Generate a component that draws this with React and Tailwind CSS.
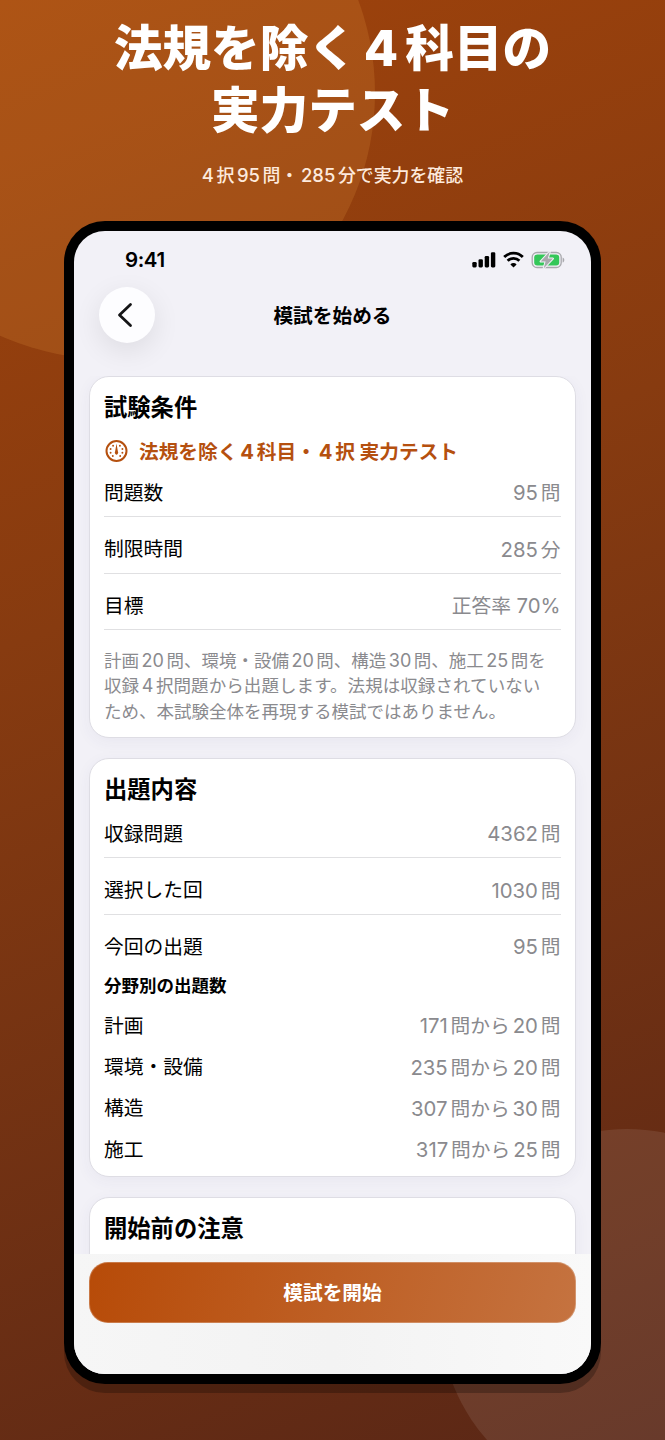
import { Fragment } from "react";

const conditions = [
    { label: "問題数", value: "95問" },
    { label: "制限時間", value: "285分" },
    { label: "目標", value: "正答率 70%" },
];

const contents = [
    { label: "収録問題", value: "4362問" },
    { label: "選択した回", value: "1030問" },
    { label: "今回の出題", value: "95問" },
];

const categories = [
    { label: "計画", value: "171問から20問" },
    { label: "環境・設備", value: "235問から20問" },
    { label: "構造", value: "307問から30問" },
    { label: "施工", value: "317問から25問" },
];

// Adds a little air between digits and Japanese characters
function Spaced({ text }) {
    return text.split(/(\d+%?)/).map((part, i, parts) => {
        if (!/^\d+%?$/.test(part)) return <Fragment key={i}>{part}</Fragment>;
        const before = parts[i - 1] && !parts[i - 1].endsWith(" ");
        const after = parts[i + 1];
        return (
            <span key={i} className={`text-[1.03em] ${before ? "ml-[0.14em]" : ""} ${after ? "mr-[0.14em]" : ""}`}>
                {part}
            </span>
        );
    });
}

function Row({ label, value, className = "h-10 pt-[3px]" }) {
    return (
        <div className={`flex items-center justify-between text-[19.75px] ${className}`}>
            <span className="text-black">{label}</span>
            <span className="text-[#8a8a8e]">
                <Spaced text={value} />
            </span>
        </div>
    );
}

function Divider() {
    return <div className="mt-1 mb-[11.5px] h-px bg-[#e0e0e2]" />;
}

function Card({ title, children, className = "" }) {
    return (
        <section className={`rounded-[20px] border border-[#dedde4] bg-white pt-[15px] pr-[14.5px] pl-[14px] shadow-[0_4px_16px_rgba(60,50,110,0.05)] ${className}`}>
            <h2 className="h-[32px] text-[23.3px] leading-[32px] font-bold text-black">{title}</h2>
            {children}
        </section>
    );
}

function GaugeIcon() {
    return (
        <svg viewBox="0 0 24 24" className="-mt-0.5 h-6 w-6 fill-none stroke-[#b5500f]">
            <circle cx="12.5" cy="12" r="10" strokeWidth="2" />
            <path d="M12.5 4.4 L11.1 12.6 a1.7 1.9 0 1 0 2.8 0 Z" className="fill-[#b5500f] stroke-none" />
            <g className="fill-[#b5500f] stroke-none">
                <circle cx="9.1" cy="6.7" r="0.95" />
                <circle cx="15.9" cy="6.7" r="0.95" />
                <circle cx="6.6" cy="10" r="0.95" />
                <circle cx="18.4" cy="10" r="0.95" />
                <circle cx="6.6" cy="13.8" r="0.95" />
                <circle cx="18.4" cy="13.8" r="0.95" />
                <circle cx="8.8" cy="17" r="0.95" />
                <circle cx="16.2" cy="17" r="0.95" />
            </g>
        </svg>
    );
}

function StatusIcons() {
    return (
        <svg viewBox="0 0 94 18" className="h-[18px] w-[94px]">
            <rect x="0.3" y="11" width="4.4" height="5.4" rx="1.3" />
            <rect x="6.5" y="8.2" width="4.4" height="8.2" rx="1.3" />
            <rect x="12.7" y="5" width="4.4" height="11.4" rx="1.3" />
            <rect x="18.9" y="1.2" width="4.4" height="15.2" rx="1.3" />
            <g fill="none" stroke="#000" strokeWidth="2.8">
                <path d="M32.2 6 a13.2 13.2 0 0 1 18.6 0" />
                <path d="M35.6 9.7 a8.4 8.4 0 0 1 11.8 0" />
            </g>
            <path d="M41.5 16.6 l-3.1 -3.2 a4.4 4.4 0 0 1 6.2 0 Z" />
            <rect x="60.2" y="1.5" width="29" height="15" rx="4.8" fill="none" stroke="#a9a9ad" strokeWidth="1.3" />
            <path d="M90.6 6.4 v5.2 c1.2 -0.5 1.7 -1.4 1.7 -2.6 s-0.5 -2.1 -1.7 -2.6 Z" fill="#a9a9ad" />
            <rect x="62.2" y="3.5" width="25" height="11" rx="3" fill="#34c759" />
            <path
                d="M77.8 0.6 L68.6 10.4 h5 L71.6 17.4 L81 7.6 h-5.2 Z"
                fill="#a9a9ad"
                stroke="#f2f1f7"
                strokeWidth="2"
                paintOrder="stroke"
                strokeLinejoin="round"
            />
        </svg>
    );
}

export default function App() {
    return (
        <div className="relative h-[1440px] w-[665px] overflow-hidden bg-[linear-gradient(158deg,#a0430b_0%,#873b10_38%,#5a2716_100%)] font-[Inter,'Noto_Sans_CJK_JP',sans-serif]">
            <div className="absolute top-[-173px] left-[-157px] h-[532px] w-[532px] rounded-full bg-[#ffb450]/15" />
            <div className="absolute top-[1129px] left-[440px] h-[374px] w-[374px] rounded-full bg-white/9" />

            <div className="relative flex flex-col items-center">
                <h1 className="mt-[17px] text-center text-[48.6px] leading-[62px] font-extrabold text-white">
                    <Spaced text="法規を除く4科目の" />
                    <br />
                    実力テスト
                </h1>
                <p className="mt-[19px] h-[28px] text-[17.9px] leading-[28px] font-medium text-[#fdeadd]">
                    <Spaced text="4択95問・285分で実力を確認" />
                </p>

                <div className="mt-[32px] h-[1163px] w-[537px] rounded-[41px] bg-black p-[10px] shadow-[0_9px_0_rgba(0,0,0,0.25)]">
                    <div className="flex h-full flex-col overflow-hidden rounded-[31px] bg-[#f2f1f7]">
                        <div className="flex h-[46px] items-end justify-between pr-[25px] pl-[51px]">
                            <span className="h-[30px] text-[20.5px] leading-[26px] font-semibold tracking-[-0.4px] text-black">9:41</span>
                            <div className="mb-[8px]">
                                <StatusIcons />
                            </div>
                        </div>

                        <div className="mt-[10px] grid h-[56px] grid-cols-[1fr_auto_1fr] items-center px-[25px]">
                            <button className="flex h-14 w-14 items-center justify-center rounded-full bg-[#fdfdff] shadow-[0_8px_28px_rgba(0,0,0,0.09)]">
                                <svg viewBox="0 0 16 26" className="mr-[4px] h-[26px] w-4 fill-none stroke-[#151517]">
                                    <path d="M13.5 2.5 L2.5 13 L13.5 23.5" strokeWidth="2.8" strokeLinecap="round" strokeLinejoin="round" />
                                </svg>
                            </button>
                            <h2 className="pt-1 text-[19.7px] font-bold text-black">模試を始める</h2>
                        </div>

                        <main className="mt-[33px] flex min-h-0 flex-1 flex-col gap-5 overflow-hidden px-[15px]">
                            <Card title="試験条件" className="h-[362px] shrink-0">
                                <div className="mt-[7px] flex h-[40px] items-center gap-[11px] pt-[2px] text-[19.7px] font-bold text-[#b5500f]">
                                    <GaugeIcon />
                                    <span>
                                        <Spaced text="法規を除く4科目・4択 実力テスト" />
                                    </span>
                                </div>
                                <div className="mt-px">
                                    {conditions.map((row) => (
                                        <Fragment key={row.label}>
                                            <Row {...row} />
                                            <Divider />
                                        </Fragment>
                                    ))}
                                </div>
                                <p className="mt-[17.5px] text-[17.5px] leading-[25.5px] whitespace-nowrap text-[#8a8a8e]">
                                    <Spaced text="計画20問、環境・設備20問、構造30問、施工25問を" />
                                    <br />
                                    <span className="tracking-[0.08px]">
                                        <Spaced text="収録4択問題から出題します。法規は収録されていない" />
                                    </span>
                                    <br />
                                    ため、本試験全体を再現する模試ではありません。
                                </p>
                            </Card>

                            <Card title="出題内容" className="h-[419px] shrink-0">
                                <div className="mt-[7px]">
                                    {contents.map((row, i) => (
                                        <Fragment key={row.label}>
                                            {i > 0 && <Divider />}
                                            <Row {...row} />
                                        </Fragment>
                                    ))}
                                </div>
                                <h3 className="h-[39px] text-[17.5px] leading-[39px] font-bold text-black">分野別の出題数</h3>
                                {categories.map((row) => (
                                    <Row key={row.label} {...row} className="h-[41.3px] pt-[2px]" />
                                ))}
                            </Card>

                            <Card title="開始前の注意" className="h-[200px] shrink-0" />
                        </main>

                        <footer className="h-[120px] shrink-0 bg-linear-to-r from-[#f6f6f6] via-[#f3f3f3] to-[#f9f9f9] px-[15px] pt-[8px]">
                            <button className="h-[61px] w-full rounded-[19px] border border-white/25 bg-[linear-gradient(105deg,#b74b08,#c57340)] bg-origin-border pt-[2px] text-[19.7px] font-bold text-white">
                                模試を開始
                            </button>
                        </footer>
                    </div>
                </div>
            </div>
        </div>
    );
}
